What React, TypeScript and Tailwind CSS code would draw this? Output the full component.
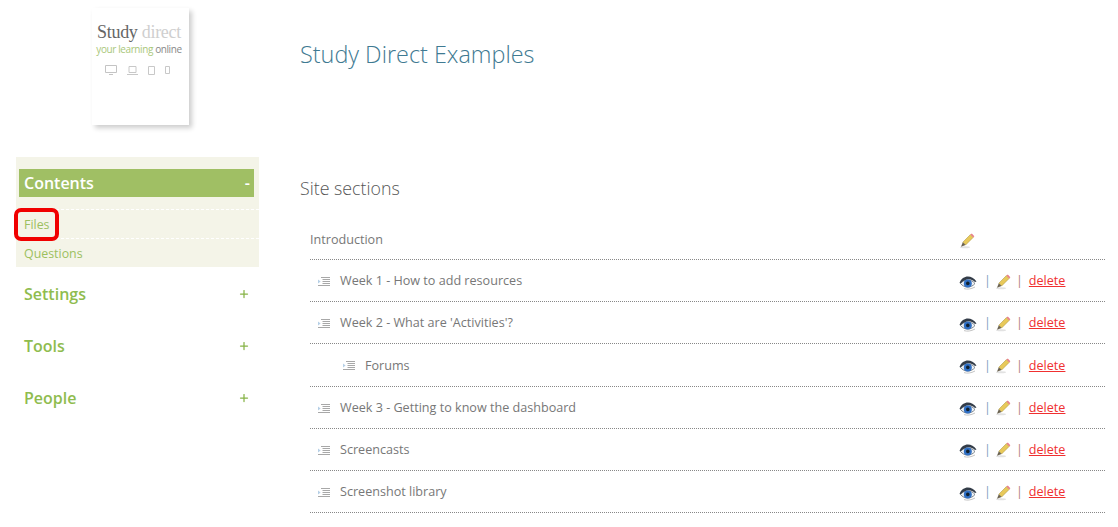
import { Plus } from 'lucide-react';

const sections = [
  { title: 'Week 1 - How to add resources', nested: false },
  { title: "Week 2 - What are 'Activities'?", nested: false },
  { title: 'Forums', nested: true },
  { title: 'Week 3 - Getting to know the dashboard', nested: false },
  { title: 'Screencasts', nested: false },
  { title: 'Screenshot library', nested: false },
];

function PencilIcon() {
  return (
    <svg width="16" height="16" viewBox="0 0 16 16" className="shrink-0">
      <ellipse cx="6" cy="14.2" rx="5" ry="1" fill="#e2e2e2" />
      <path d="M3.8 9.2 L11.4 1.6 L14.2 4.4 L6.6 12 Z" fill="#e8c95a" stroke="#a8923c" strokeWidth="0.5" />
      <path d="M11.4 1.6 L12.8 0.5 L15.4 3.2 L14.2 4.4 Z" fill="#e9808a" />
      <path d="M3.8 9.2 L6.6 12 L2 13.8 Z" fill="#6b6250" />
    </svg>
  );
}

function EyeIcon() {
  return (
    <svg width="18" height="16" viewBox="0 0 18 16" className="shrink-0">
      <path d="M0.5 9 C3.5 1 12.5 0.5 17.5 7.5 L16 8 C11.5 3.5 6 4.5 2.5 9.5 Z" fill="#333c48" />
      <path d="M1.5 9.5 C5 5 12 4.5 16 9.5 C12 14.5 5 14 1.5 9.5 Z" fill="#eef1f4" stroke="#4c5660" strokeWidth="0.7" />
      <circle cx="8.8" cy="9.4" r="4" fill="#2f6fc4" />
      <circle cx="8.8" cy="9.4" r="1.8" fill="#10202f" />
      <path d="M5 14.6 C8 15.6 12 15.2 16 13" stroke="#c4c4c4" strokeWidth="1" fill="none" />
    </svg>
  );
}

function ListIcon() {
  return (
    <svg width="13" height="11" viewBox="0 0 13 11" className="shrink-0">
      <path d="M4 1.5h9M5.5 3.5H13M5.5 5.5H13M5.5 7.5H13M1 9.5h12" stroke="#a8a8a8" strokeWidth="1" />
      <path d="M1 3.5 L3.6 5.5 L1 7.5 Z" fill="#b5cfe6" />
    </svg>
  );
}

function LogoCard() {
  return (
    <div className="ml-[92px] mt-2 w-[97px] h-[117px] bg-white shadow-[3px_3px_5px_rgba(0,0,0,0.2)] flex flex-col items-center pt-[14px]">
      <div className="text-[18px] leading-[20px] tracking-[-0.3px] font-['Liberation_Serif',serif] text-[#666] mr-[3px]">
        Study <span className="text-[#cfcfcf]">direct</span>
      </div>
      <div className="text-[10px] leading-[14px] tracking-[-0.4px] text-[#a9c77a] mr-[3px]">
        your learning <span className="text-[#888]">online</span>
      </div>
      <div className="flex items-center gap-[10px] mt-[9px] mr-[7px]">
        <svg width="12" height="10" viewBox="0 0 12 10" fill="none" stroke="#c4c4c4"><path d="M.5.5h11v7H.5zM4 9.5h4" /></svg>
        <svg width="11" height="9" viewBox="0 0 11 9" fill="none" stroke="#c8c8c8"><path d="M2 .5h7v6H2zM0 8.5h11" /></svg>
        <svg width="7" height="9" viewBox="0 0 7 9" fill="none" stroke="#c8c8c8"><path d="M.5.5h6v8h-6z" /></svg>
        <svg width="5" height="8" viewBox="0 0 5 8" fill="none" stroke="#c8c8c8"><path d="M.5.5h4v7h-4z" /></svg>
      </div>
    </div>
  );
}

function CollapsedBlock({ label }: { label: string }) {
  return (
    <div className="h-[52px] flex items-center justify-between pl-[16px] pr-[9px] text-[#8fbc4e]">
      <span className="text-[16px] font-semibold">{label}</span>
      <Plus className="w-3 h-3 text-[#86b345]" strokeWidth={2.5} />
    </div>
  );
}

function Sidebar() {
  return (
    <aside className="w-[259px] shrink-0">
      <LogoCard />
      <div className="relative ml-4 mt-8 w-[243px] h-[110px] bg-[#f4f4e8] pt-3">
        <div className="ml-[3px] w-[235px] h-7 bg-[#a0bf64] flex items-center justify-between pl-[5px] pr-[4px] text-white font-semibold text-[16px]">
          <span>Contents</span>
          <span>-</span>
        </div>
        <div className="mt-3 border-t border-dashed border-white h-[29px] flex items-center pl-2 pt-[2px] text-[12.4px] text-[#9cc05f]">Files</div>
        <div className="border-t border-dashed border-white h-[29px] flex items-center pl-2 pt-[2px] text-[12.4px] text-[#9cc05f]">Questions</div>
        {/* red highlight from the annotated screenshot */}
        <div className="absolute left-[-2px] top-[51px] w-[45px] h-[33px] border-4 border-[#f00000] rounded-[7px]" />
      </div>
      <div className="ml-2 mt-[1px]">
        <CollapsedBlock label="Settings" />
        <CollapsedBlock label="Tools" />
        <CollapsedBlock label="People" />
      </div>
    </aside>
  );
}

function SectionRow({ title, nested }: { title: string; nested: boolean }) {
  return (
    <div className="flex items-center h-[42.2px] pt-[2px] border-b border-dotted border-[#888]">
      <div className={`flex-1 flex items-center gap-[10px] ${nested ? 'pl-[32px]' : 'pl-[7px]'}`}>
        <ListIcon />
        <span>{title}</span>
      </div>
      <div className="w-[146px] flex items-center text-[#888]">
        <EyeIcon />
        <span className="ml-[7px] text-[#7f9fc0]">|</span>
        <span className="ml-[4px]"><PencilIcon /></span>
        <span className="ml-[5px] text-[#b08080]">|</span>
        <a href="#" className="ml-[6px] text-[#f03030] underline">delete</a>
      </div>
    </div>
  );
}

export default function App() {
  return (
    <div className="flex w-[1118px] h-[527px] overflow-hidden bg-white font-['Open_Sans',sans-serif]">
      <Sidebar />
      <main className="flex-1 pl-[41px] pr-[13px]">
        <h1 className="mt-[37px] text-[23.4px] font-light leading-[34px] text-[#3f7a92]">Study Direct Examples</h1>
        <h2 className="mt-[105px] text-[17.8px] font-light leading-6 text-[#555]">Site sections</h2>
        <div className="ml-[10px] mt-[19px] text-[12.6px] text-[#777]">
          <div className="flex items-center h-[41px] pt-[3px] border-b border-dotted border-[#888]">
            <span className="flex-1">Introduction</span>
            <div className="w-[146px]"><PencilIcon /></div>
          </div>
          {sections.map((s) => (
            <SectionRow key={s.title} title={s.title} nested={s.nested} />
          ))}
        </div>
      </main>
    </div>
  );
}
